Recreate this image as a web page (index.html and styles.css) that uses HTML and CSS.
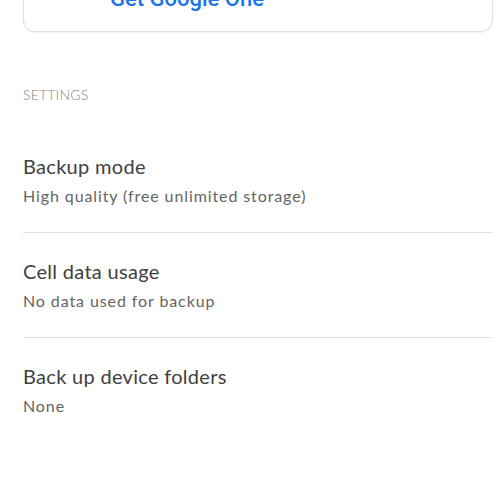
FILE: index.html
```html
<!DOCTYPE html>
<html lang="en">
<head>
<meta charset="utf-8">
<title>Backup settings</title>
<link rel="stylesheet" href="styles.css">
</head>
<body>
<div class="page">
  <div class="card">
    <a class="card-link" href="#">Get Google One</a>
  </div>
  <div class="section-label">SETTINGS</div>
  <ul class="settings">
    <li class="row">
      <div class="row-title">Backup mode</div>
      <div class="row-sub">High quality (free unlimited storage)</div>
    </li>
    <li class="row">
      <div class="row-title">Cell data usage</div>
      <div class="row-sub">No data used for backup</div>
    </li>
    <li class="row">
      <div class="row-title">Back up device folders</div>
      <div class="row-sub">None</div>
    </li>
  </ul>
</div>
</body>
</html>
```

FILE: styles.css
```css
html, body {
  margin: 0;
  padding: 0;
  background: #ffffff;
}

body {
  font-family: Lato, "Open Sans", "DejaVu Sans", sans-serif;
  overflow: hidden;
}

.page {
  padding: 0 7px 0 23px;
}

.card {
  margin-top: -40px;
  height: 72px;
  box-sizing: border-box;
  border: 1px solid #dedede;
  border-radius: 12px;
  box-shadow: 0 1px 1px rgba(0, 0, 0, 0.06);
  padding: 26px 0 0 86px;
}

.card-link {
  display: block;
  font-family: Roboto, "Liberation Sans", sans-serif;
  font-weight: 500;
  font-size: 22px;
  line-height: 24px;
  color: #1a73e8;
  text-decoration: none;
}

.section-label {
  margin-top: 55px;
  font-size: 14px;
  line-height: 16px;
  font-weight: 300;
  color: #858585;
  letter-spacing: 0.2px;
}

.settings {
  list-style: none;
  margin: 25px 0 0;
  padding: 0;
}

.row {
  padding: 26px 0 26px;
  display: flex;
  flex-direction: column;
  gap: 8px;
}

.row + .row {
  border-top: 1px solid #e2e2e2;
}

.row-title {
  font-size: 20px;
  line-height: 24px;
  color: #404040;
  letter-spacing: 0.3px;
}

.row-sub {
  font-size: 16px;
  line-height: 20px;
  color: #646464;
  letter-spacing: 0.9px;
}
```
